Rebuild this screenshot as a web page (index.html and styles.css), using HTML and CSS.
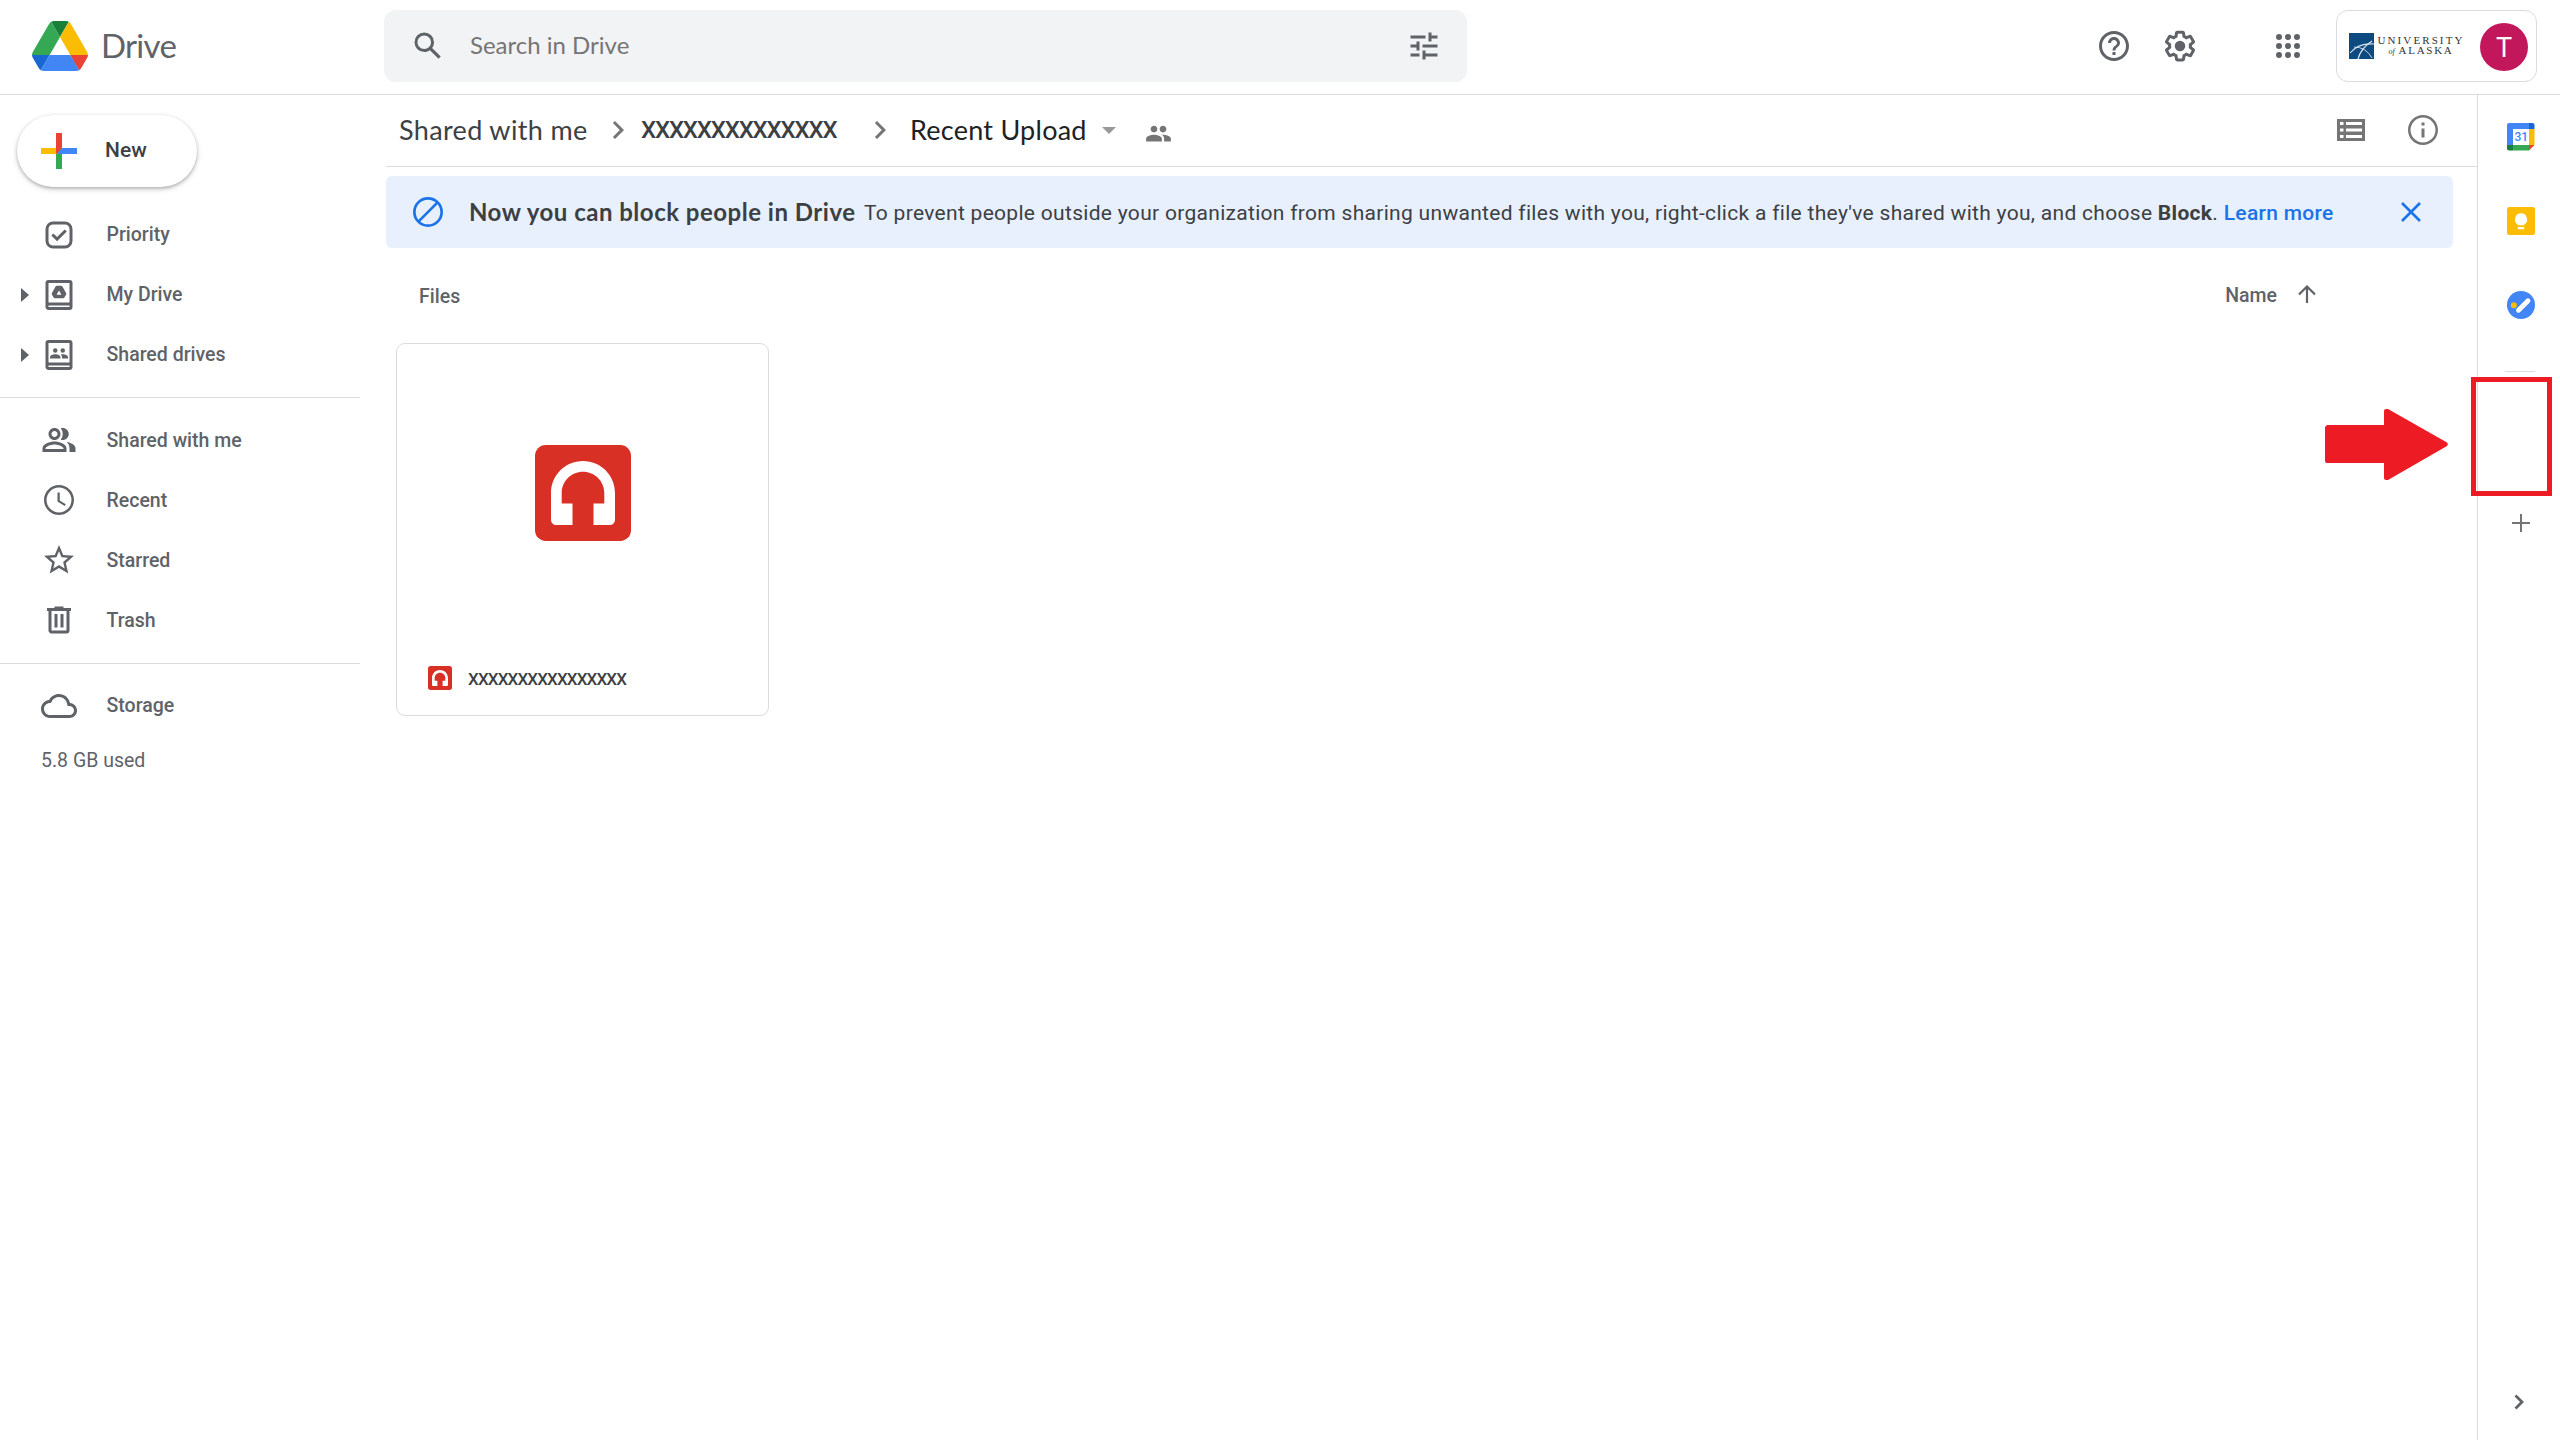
FILE: index.html
```html
<!DOCTYPE html>
<html lang="en">
<head>
<meta charset="utf-8">
<title>Recent Upload - Google Drive</title>
<link rel="stylesheet" href="styles.css">
</head>
<body>
<svg class="defs" width="0" height="0" aria-hidden="true">
  <symbol id="audio" viewBox="0 0 96 96">
    <rect width="96" height="96" rx="10.7" fill="#d93025"/>
    <path fill="#fff" d="M48 16c-17.7 0-32 14.300-32 32v26.700c0 2.900 2.400 5.300 5.300 5.300H37.500V58.500H26.700V48c0-11.800 9.500-21.300 21.300-21.300S69.300 36.200 69.300 48v10.500H58.500V80H74.700c2.900 0 5.300-2.400 5.300-5.300V48c0-17.700-14.300-32-32-32z"/>
  </symbol>
  <symbol id="chevron" viewBox="0 0 24 24"><path d="M8.590 16.590L13.170 12 8.590 7.410 10 6l6 6-6 6z"/></symbol>
</svg>

<header class="topbar">
  <a class="brand">
    <svg class="brand-logo" viewBox="0 0 87.300 78">
      <path d="m6.600 66.850 3.850 6.650c.8 1.400 1.950 2.500 3.300 3.300l13.750-23.800h-27.500c0 1.550.4 3.100 1.200 4.500z" fill="#1967d2"/>
      <path d="m43.650 25-13.750-23.800c-1.350.8-2.500 1.900-3.300 3.300l-25.400 44a9.060 9.060 0 0 0 -1.200 4.500h27.500z" fill="#34a853"/>
      <path d="m73.550 76.800c1.350-.8 2.500-1.900 3.300-3.300l1.600-2.750 7.650-13.250c.8-1.400 1.200-2.950 1.200-4.500h-27.502l5.852 11.500z" fill="#ea4335"/>
      <path d="m43.650 25 13.750-23.800c-1.350-.8-2.900-1.200-4.500-1.200h-18.500c-1.600 0-3.150.45-4.500 1.200z" fill="#188038"/>
      <path d="m59.800 53h-32.300l-13.750 23.800c1.350.8 2.900 1.200 4.500 1.200h50.800c1.600 0 3.150-.45 4.500-1.200z" fill="#4285f4"/>
      <path d="m73.400 26.500-12.700-22c-.8-1.400-1.950-2.500-3.300-3.300l-13.750 23.800 16.150 28h27.450c0-1.550-.4-3.100-1.200-4.500z" fill="#fbbc04"/>
    </svg>
    <span class="brand-name">Drive</span>
  </a>
  <div class="search">
    <svg class="ic" viewBox="0 0 24 24"><path d="M20.490 19l-5.730-5.730C15.530 12.200 16 10.910 16 9.500A6.500 6.500 0 1 0 9.500 16c1.410 0 2.700-.47 3.770-1.240L19 20.490 20.490 19zM5 9.500C5 7.010 7.010 5 9.500 5S14 7.010 14 9.500 11.990 14 9.500 14 5 11.990 5 9.500z"/></svg>
    <span class="search-text">Search in Drive</span>
    <svg class="ic" viewBox="0 0 24 24"><path d="M3 17v2h6v-2H3zM3 5v2h10V5H3zm10 16v-2h8v-2h-8v-2h-2v6h2zM7 9v2H3v2h4v2h2V9H7zm14 4v-2H11v2h10zm-6-4h2V7h4V5h-4V3h-2v6z"/></svg>
  </div>
  <div class="actions">
    <svg class="ic" viewBox="0 0 24 24"><path d="M11 18h2v-2h-2v2zm1-16C6.480 2 2 6.480 2 12s4.480 10 10 10 10-4.480 10-10S17.520 2 12 2zm0 18c-4.410 0-8-3.590-8-8s3.590-8 8-8 8 3.590 8 8-3.590 8-8 8zm0-14c-2.210 0-4 1.790-4 4h2c0-1.100.9-2 2-2s2 .9 2 2c0 2-3 1.750-3 5h2c0-2.250 3-2.500 3-5 0-2.210-1.790-4-4-4z"/></svg>
    <svg class="ic gear" viewBox="0 0 24 24"><path d="M13.850 22.250h-3.700c-.74 0-1.360-.54-1.450-1.270l-.27-1.890c-.27-.14-.53-.29-.79-.46l-1.800.72c-.7.26-1.470-.03-1.810-.65L2.200 15.530c-.35-.66-.2-1.440.36-1.880l1.530-1.190c-.01-.15-.02-.3-.02-.46 0-.15.01-.31.020-.46l-1.520-1.190c-.59-.45-.74-1.260-.37-1.880l1.850-3.190c.34-.62 1.110-.9 1.790-.63l1.810.73c.26-.17.52-.32.78-.46l.27-1.910c.09-.7.710-1.250 1.440-1.250h3.700c.74 0 1.360.54 1.450 1.270l.27 1.890c.27.14.53.29.79.46l1.800-.72c.71-.26 1.480.03 1.820.65l1.840 3.180c.36.66.2 1.440-.36 1.880l-1.520 1.190c.01.15.02.3.020.46s-.01.31-.02.46l1.520 1.190c.56.45.72 1.230.37 1.860l-1.860 3.220c-.34.62-1.110.9-1.800.63l-1.800-.72c-.26.17-.52.32-.78.46l-.27 1.910c-.1.680-.72 1.220-1.460 1.220zm-3.230-2h2.760l.37-2.550.53-.22c.44-.18.88-.44 1.340-.78l.45-.34 2.380.96 1.380-2.400-2.030-1.580.07-.56c.03-.26.06-.51.06-.78s-.03-.53-.06-.78l-.07-.56 2.030-1.580-1.390-2.400-2.390.96-.45-.35c-.42-.32-.87-.58-1.330-.77l-.52-.22-.37-2.550h-2.760l-.37 2.550-.53.21c-.44.19-.88.44-1.340.79l-.45.330-2.380-.95-1.390 2.390 2.030 1.580-.07.56a7 7 0 0 0-.06.79c0 .26.02.53.06.78l.07.56-2.030 1.580 1.380 2.400 2.390-.96.450.35c.43.33.86.58 1.330.77l.53.220.38 2.550z"/><circle cx="12" cy="12" r="3.500"/></svg>
    <svg class="ic apps" viewBox="0 0 24 24"><g><circle cx="6" cy="6" r="2"/><circle cx="12" cy="6" r="2"/><circle cx="18" cy="6" r="2"/><circle cx="6" cy="12" r="2"/><circle cx="12" cy="12" r="2"/><circle cx="18" cy="12" r="2"/><circle cx="6" cy="18" r="2"/><circle cx="12" cy="18" r="2"/><circle cx="18" cy="18" r="2"/></g></svg>
    <div class="account">
      <svg class="ua-mark" viewBox="0 0 25 26"><rect width="25" height="26" fill="#0d4a80"/><g fill="none" stroke="#d5e2ee"><path d="M1 20Q9 10 25 11" stroke-width="1.200"/><path d="M5 14Q17 14 23 25" stroke-width=".9"/><path d="M9 26Q12 15 23 8" stroke-width="1.300"/></g></svg>
      <div class="ua-name"><span class="ua-top">UNIVERSITY</span><span class="ua-bottom"><i>of</i> ALASKA</span></div>
      <span class="avatar">T</span>
    </div>
  </div>
</header>

<div class="body">
  <nav class="sidebar">
    <a class="new">
      <svg viewBox="0 0 36 36"><path fill="#34a853" d="M15 16h6v20h-6z"/><path fill="#4285f4" d="M36 15v6H15l6-6z"/><path fill="#fbbc04" d="M0 15h16v6H0z"/><path fill="#ea4335" d="M15 0h6v15l-6 6z"/></svg>
      <span>New</span>
    </a>
    <a class="item"><svg class="ic" viewBox="0 0 24 24"><rect x="4" y="4" width="16" height="16" rx="4" fill="none" stroke="#5f6368" stroke-width="2"/><path d="M10.700 16.200L6.900 12.400l1.400-1.400 2.400 2.400 5.100-5.100 1.400 1.400z"/></svg><span class="up">Priority</span></a>
    <a class="item"><i class="twisty"></i><svg class="ic" viewBox="0 0 24 24"><path fill-rule="evenodd" d="M19 2H5a2 2 0 0 0-2 2v16c0 1.100.9 2 2 2h14a2 2 0 0 0 2-2V4a2 2 0 0 0-2-2zm0 18H5v-1h14zm0-3H5V4h14zM10.700 5.800h2.600c.4 0 .8.200 1 .6l2.400 4.200c.2.400.2.800 0 1.200l-1 1.700c-.2.400-.6.600-1 .6H9.300c-.4 0-.8-.2-1-.6l-1-1.700c-.2-.4-.2-.8 0-1.200l2.400-4.200c.2-.4.600-.6 1-.6zM12 9l-1.600 2.800h3.200z"/></svg><span class="up">My Drive</span></a>
    <a class="item"><i class="twisty"></i><svg class="ic" viewBox="0 0 24 24"><path fill-rule="evenodd" d="M19 2H5a2 2 0 0 0-2 2v16c0 1.100.9 2 2 2h14a2 2 0 0 0 2-2V4a2 2 0 0 0-2-2zm0 18H5v-1h14zm0-3H5V4h14z"/><circle cx="9.500" cy="9" r="1.500"/><circle cx="14.500" cy="9" r="1.500"/><path d="M6 14.300v-.9c0-1.200 1.800-1.900 3.500-1.900s3.500.7 3.500 1.900v.9zM14 14.300v-.9c0-.7-.4-1.300-.9-1.700 2-.5 4.900.2 4.900 1.700v.9z"/></svg><span class="up">Shared drives</span></a>
    <hr>
    <a class="item"><svg class="ic" viewBox="0 0 24 24"><path d="M9 12c2.210 0 4-1.790 4-4s-1.790-4-4-4-4 1.790-4 4 1.790 4 4 4zm0-6c1.100 0 2 .9 2 2s-.9 2-2 2-2-.9-2-2 .9-2 2-2zm0 7c-3 0-8 1.500-8 4.500V20h16v-2.500c0-3-5-4.500-8-4.500zm6 5H3v-.5C3.200 16.600 6.300 15 9 15s5.800 1.600 6 2.500zM14.500 12c2.210 0 4-1.790 4-4s-1.790-4-4-4c-.47 0-.91.1-1.330.24a5.980 5.980 0 0 1 0 7.520c.42.140.860.240 1.330.240zM17 13.400c1.300.9 2 2.200 2 4.100V20h4v-2.500c0-2.200-3-3.600-6-4.100z"/></svg><span>Shared with me</span></a>
    <a class="item"><svg class="ic" viewBox="0 0 24 24"><path d="M11.990 2C6.470 2 2 6.480 2 12s4.470 10 9.990 10C17.520 22 22 17.520 22 12S17.520 2 11.990 2zM12 20.300A8.300 8.300 0 1 1 12 3.700a8.300 8.300 0 0 1 0 16.600zM12.500 7H11v6l4.800 3 .75-1.250-4.050-2.500z"/></svg><span>Recent</span></a>
    <a class="item"><svg class="ic" viewBox="0 0 24 24"><path d="M22 9.240l-7.190-.62L12 2 9.190 8.630 2 9.240l5.460 4.730L5.820 21 12 17.270 18.180 21l-1.630-7.030L22 9.240zM12 15.400l-3.760 2.270 1-4.280-3.320-2.880 4.380-.38L12 6.100l1.710 4.040 4.380.38-3.320 2.880 1 4.280L12 15.400z"/></svg><span>Starred</span></a>
    <a class="item"><svg class="ic" viewBox="0 0 24 24"><path d="M15 4V3H9v1H4v2h1v13c0 1.100.9 2 2 2h10a2 2 0 0 0 2-2V6h1V4h-5zm2 15H7V6h10v13zM9 8h2v9H9zm4 0h2v9h-2z"/></svg><span>Trash</span></a>
    <hr class="second">
    <a class="item storage"><svg class="ic" viewBox="0 0 24 24"><path d="M19.350 10.040C18.670 6.590 15.640 4 12 4 9.110 4 6.600 5.640 5.350 8.040 2.340 8.360 0 10.910 0 14c0 3.310 2.690 6 6 6h13c2.760 0 5-2.240 5-5 0-2.640-2.050-4.780-4.650-4.960zM19 18H6c-2.210 0-4-1.790-4-4 0-2.050 1.530-3.760 3.560-3.970l1.070-.11.5-.95C8.080 7.140 9.940 6 12 6c2.620 0 4.880 1.860 5.390 4.430l.3 1.500 1.530.11c1.560.1 2.780 1.410 2.780 2.960 0 1.650-1.350 3-3 3z"/></svg><span class="up">Storage</span></a>
    <div class="quota">5.8 GB used</div>
  </nav>

  <main class="main">
    <div class="crumbs">
      <span class="crumb c1">Shared with me</span>
      <svg class="ic chev1"><use href="#chevron"/></svg>
      <span class="crumb c2">XXXXXXXXXXXXXX</span>
      <svg class="ic chev2"><use href="#chevron"/></svg>
      <span class="crumb c3">Recent Upload</span>
      <i class="caret"></i>
      <svg class="people" viewBox="0 0 24 24"><path d="M16 11c1.660 0 2.990-1.340 2.990-3S17.660 5 16 5s-3 1.340-3 3 1.340 3 3 3zm-8 0c1.660 0 2.990-1.340 2.990-3S9.660 5 8 5 5 6.340 5 8s1.340 3 3 3zm0 2c-2.330 0-7 1.170-7 3.500V19h14v-2.500c0-2.330-4.670-3.500-7-3.500zm8 0c-.29 0-.62.020-.97.050 1.160.84 1.970 1.970 1.970 3.450V19h6v-2.500c0-2.330-4.670-3.500-7-3.500z"/></svg>
      <div class="view">
        <svg class="list-ic" viewBox="0 0 28 22"><path fill-rule="evenodd" d="M0 0h28v22H0zM3 3v3h3.500V3zm6 0v3h16V3zM3 9.500v3h3.500v-3zm6 0v3h16v-3zM3 16v3h3.500v-3zm6 0v3h16v-3z"/></svg>
        <svg class="ic" viewBox="0 0 24 24"><path d="M11 17h2v-6h-2v6zm1-15C6.480 2 2 6.480 2 12s4.480 10 10 10 10-4.480 10-10S17.520 2 12 2zm0 18.300A8.300 8.300 0 1 1 12 3.700a8.300 8.300 0 0 1 0 16.600zM11 9h2V7h-2v2z"/></svg>
      </div>
    </div>
    <div class="banner">
      <svg class="ic" viewBox="0 0 24 24"><g fill="none" stroke="#1a73e8" stroke-width="1.800"><circle cx="12" cy="12" r="9.100"/><path d="M5.600 18.400L18.400 5.600"/></g></svg>
      <b class="banner-title">Now you can block people in Drive</b>
      <span class="banner-text">To prevent people outside your organization from sharing unwanted files with you, right-click a file they've shared with you, and choose <b>Block</b>. <a>Learn more</a></span>
      <svg class="close" viewBox="0 0 20 20"><path d="M1 1l18 18M19 1L1 19" stroke="#1a73e8" stroke-width="2.600"/></svg>
    </div>
    <div class="listhead">
      <span class="files">Files</span>
      <span class="sort">Name</span>
      <svg class="sort-arrow" viewBox="0 0 18 18"><path d="M9 18V1.500M1 9.500L9 1.500l8 8" fill="none" stroke="#5f6368" stroke-width="2.200"/></svg>
    </div>
    <div class="card">
      <div class="preview"><svg width="96" height="96"><use href="#audio"/></svg></div>
      <div class="card-name"><svg width="24" height="24"><use href="#audio"/></svg><span>XXXXXXXXXXXXXXXX</span></div>
    </div>
  </main>

  <aside class="rail">
    <svg class="app" viewBox="0 0 28 28"><rect width="28" height="28" rx="2" fill="#fff"/><path fill="#4285f4" d="M2 0h20v6H6v16H0V2a2 2 0 0 1 2-2z"/><path fill="#1967d2" d="M22 0h3.500A2 2 0 0 1 27.500 2v4H22z"/><path fill="#fbbc04" d="M22 6h5.500v16H22z"/><path fill="#34a853" d="M6 22h16v5.500H6z"/><path fill="#188038" d="M0 22h6v5.500H2a2 2 0 0 1-2-2z"/><path fill="#ea4335" d="M22 22h5.500L22 27.500z"/><text x="14.200" y="18.300" text-anchor="middle">31</text></svg>
    <svg class="app" viewBox="0 0 28 28"><rect width="28" height="28" rx="2.500" fill="#fbbc04"/><path fill="#fff" d="M14 6.300a6.100 6.100 0 0 0-3.300 11.200v.7h6.600v-.7A6.100 6.100 0 0 0 14 6.300zM10.900 20h6.200v2.200h-6.200z"/></svg>
    <svg class="app" viewBox="0 0 28 28"><circle cx="14" cy="14" r="14" fill="#4285f4"/><path d="M11.500 19.200L21 9.700" stroke="#fff" stroke-width="4.800" stroke-linecap="round"/><circle cx="6.800" cy="14.200" r="3" fill="#fbbc04"/></svg>
    <hr>
    <svg class="plus" viewBox="0 0 18 18"><path d="M8 0h2v8h8v2h-8v8H8v-8H0V8h8z"/></svg>
    <svg class="collapse" viewBox="0 0 10 16"><path d="M1.500 1.500L8 8l-6.500 6.500" fill="none" stroke="#5f6368" stroke-width="2.800"/></svg>
  </aside>
</div>

<div class="highlight"></div>
<svg class="pointer" viewBox="0 0 123 71"><path fill="#ed1c24" d="M2 16H59V2Q59 0 61 0H63L122 33.500Q123.500 35 122 37L63 71H61Q59 71 59 69V54H2Q0 54 0 52V18Z"/></svg>
</body>
</html>
```
FILE: styles.css
```css
* { box-sizing: border-box; }

body {
  margin: 0;
  width: 2560px;
  height: 1440px;
  overflow: hidden;
  position: relative;
  display: flex;
  flex-direction: column;
  background: #fff;
  color: #5f6368;
  font-family: Roboto, "Liberation Sans", sans-serif;
  font-size: 19.5px;
  white-space: nowrap;
}

svg { display: block; flex: none; }
.defs { position: absolute; }
.ic { width: 36px; height: 36px; fill: #5f6368; }
hr { margin: 0; border: 0; height: 1px; background: #dadce0; }

/* Top bar */
.topbar {
  height: 95px;
  flex: none;
  display: flex;
  align-items: flex-start;
  border-bottom: 1px solid #dadce0;
}
.brand { width: 384px; height: 92px; padding-left: 32px; display: flex; align-items: center; }
.brand-logo { width: 56px; height: 50px; }
.brand-name { font-family: Lato, sans-serif; font-size: 33px; margin: -2px 0 0 13px; letter-spacing: -.7px; }
.search {
  width: 1083px;
  height: 72px;
  margin-top: 10px;
  padding: 0 25px 0 26px;
  display: flex;
  align-items: center;
  border-radius: 12px;
  background: #f1f3f4;
}
.search-text { flex: 1; margin: -3px 0 0 24px; font-family: Lato, sans-serif; font-size: 24px; color: #757575; }
.actions { margin-left: auto; margin-top: 10px; height: 72px; display: flex; align-items: center; padding-right: 23px; }
.gear { margin-left: 30px; }
.apps { margin-left: 72px; }
.account {
  width: 201px;
  height: 72px;
  margin-left: 30px;
  padding: 0 8px 0 12px;
  display: flex;
  align-items: center;
  border: 1px solid #dadce0;
  border-radius: 12px;
}
.ua-mark { width: 25px; height: 26px; }
.ua-name { width: 90px; margin-left: 2px; display: flex; flex-direction: column; align-items: center; font-family: "Liberation Serif", serif; font-size: 11px; line-height: 10px; color: #333; }
.ua-top { letter-spacing: 2.100px; }
.ua-bottom { letter-spacing: 1.700px; }
.ua-bottom i { font-size: 8px; letter-spacing: 0; }
.avatar { width: 48px; height: 48px; margin: 2px 0 0 auto; border-radius: 50%; background: #c2185b; color: #fff; font-size: 27px; line-height: 50px; text-align: center; }

/* Left navigation */
.body { flex: 1; display: flex; min-height: 0; }
.sidebar { width: 386px; padding-top: 20px; }
.sidebar hr { width: 360px; margin: 12px 0; }
.sidebar .second { margin-top: 13px; }
.new {
  width: 180px;
  height: 72px;
  margin: 0 0 18px 17px;
  padding-left: 24px;
  display: flex;
  align-items: center;
  gap: 28px;
  border-radius: 36px;
  box-shadow: 0 1.500px 3px rgba(60, 64, 67, .3), 0 2px 5px 1px rgba(60, 64, 67, .15);
  color: #3c4043;
  font-size: 21px;
  font-weight: 500;
}
.new svg { width: 36px; height: 36px; }
.new span { margin-top: -3px; }
.item { height: 60px; padding-left: 41px; display: flex; align-items: center; gap: 29.5px; position: relative; font-weight: 500; }
.up { margin-top: -2px; }
.twisty { position: absolute; left: 21px; top: 23px; border: solid transparent; border-width: 7px 0 7px 8px; border-left-color: #5f6368; }
.quota { padding: 13px 0 0 41px; }

/* Content */
.main { width: 2091px; }
.crumbs { height: 72px; padding-bottom: 1px; display: flex; align-items: center; border-bottom: 1px solid #dadce0; }
.crumbs .ic, .crumbs .people, .list-ic { fill: #757575; }
.crumb { margin-top: -2px; font-family: Lato, sans-serif; font-size: 27px; color: #3c4043; }
.c1 { width: 201px; padding-left: 13px; letter-spacing: .35px; }
.chev1 { margin-left: 13px; }
.c2 { width: 196px; margin: 0 0 0 5px; font-family: Roboto, sans-serif; font-weight: 500; font-size: 24px; letter-spacing: -1.200px; }
.chev2 { margin-left: 25px; }
.c3 { width: 175px; margin-left: 12px; color: #202124; letter-spacing: .25px; }
.caret { margin-left: 17px; border: solid transparent; border-width: 7px 7px 0; border-top-color: #999; }
.people { width: 27px; height: 27px; margin: 7px 0 0 29px; }
.view { margin-left: auto; padding-right: 36px; display: flex; align-items: center; gap: 40px; }
.list-ic { width: 28px; height: 22px; }
.banner {
  width: 2067px;
  height: 72px;
  margin-top: 9px;
  padding: 0 32px 0 24px;
  display: flex;
  align-items: center;
  border-radius: 6px;
  background: #e8f0fe;
  color: #3c4043;
}
.banner-title { width: 395px; margin: -1px 0 0 23px; font-family: Lato, sans-serif; font-size: 24px; font-weight: 700; letter-spacing: .5px; }
.banner-text { font-size: 21px; letter-spacing: .3px; margin-top: 2px; }
.banner-text a { color: #1a73e8; font-weight: 500; }
.close { width: 20px; height: 20px; margin-left: auto; }
.listhead { height: 95px; display: flex; align-items: center; padding: 0 161px 0 33px; font-weight: 500; }
.files { margin: 1px auto 0 0; }
.sort { margin-top: -1px; }
.sort-arrow { width: 18px; height: 18px; margin: -3px 0 0 21px; }
.card { width: 373px; height: 373px; margin-left: 10px; border: 1px solid #dadce0; border-radius: 9px; }
.preview { height: 298px; display: flex; align-items: center; justify-content: center; }
.card-name { height: 48px; padding: 0 0 0 31px; display: flex; align-items: center; gap: 16px; margin-top: 12px; font-size: 17px; font-weight: 500; color: #3c4043; letter-spacing: -.85px; }
.card-name span { margin-top: 2px; }

/* Side panel */
.rail { width: 83px; border-left: 1px solid #dadce0; padding-top: 28px; display: flex; flex-direction: column; }
.app { width: 28px; height: 28px; margin: 0 0 56px 29px; }
.app text { font: 500 12px Roboto, sans-serif; fill: #4285f4; }
.rail hr { width: 30px; margin: -4px 0 142px 27px; }
.plus { width: 18px; height: 18px; margin-left: 34px; fill: #757575; }
.collapse { width: 10px; height: 16px; margin: auto 0 30px 36px; }

/* Annotation over the page */
.highlight { position: absolute; left: 2471px; top: 377px; width: 81px; height: 119px; border: 5px solid #ed1c24; }
.pointer { position: absolute; left: 2325px; top: 409px; width: 123px; height: 71px; }
```
